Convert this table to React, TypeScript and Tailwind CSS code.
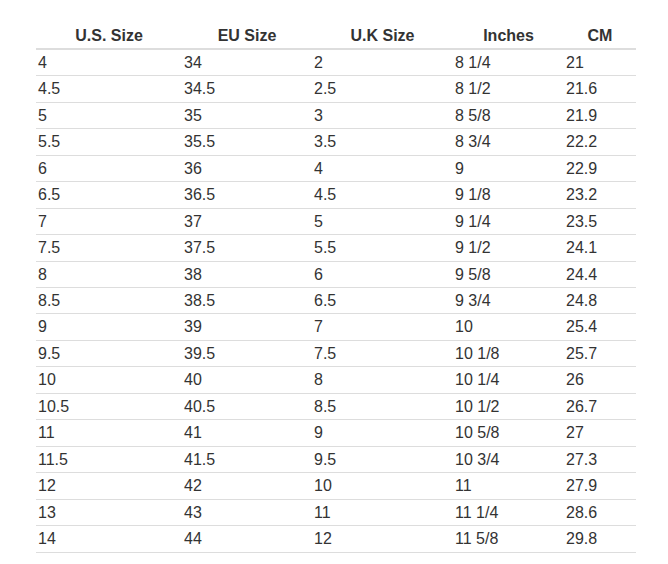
const rows: [string, string, string, string, string][] = [
    ['4', '34', '2', '8 1/4', '21'],
    ['4.5', '34.5', '2.5', '8 1/2', '21.6'],
    ['5', '35', '3', '8 5/8', '21.9'],
    ['5.5', '35.5', '3.5', '8 3/4', '22.2'],
    ['6', '36', '4', '9', '22.9'],
    ['6.5', '36.5', '4.5', '9 1/8', '23.2'],
    ['7', '37', '5', '9 1/4', '23.5'],
    ['7.5', '37.5', '5.5', '9 1/2', '24.1'],
    ['8', '38', '6', '9 5/8', '24.4'],
    ['8.5', '38.5', '6.5', '9 3/4', '24.8'],
    ['9', '39', '7', '10', '25.4'],
    ['9.5', '39.5', '7.5', '10 1/8', '25.7'],
    ['10', '40', '8', '10 1/4', '26'],
    ['10.5', '40.5', '8.5', '10 1/2', '26.7'],
    ['11', '41', '9', '10 5/8', '27'],
    ['11.5', '41.5', '9.5', '10 3/4', '27.3'],
    ['12', '42', '10', '11', '27.9'],
    ['13', '43', '11', '11 1/4', '28.6'],
    ['14', '44', '12', '11 5/8', '29.8'],
];

const headers = ['U.S. Size', 'EU Size', 'U.K Size', 'Inches', 'CM'];

export default function App() {
    return (
        <div className="min-h-[564px] bg-white px-[36px] pt-[20.5px] font-['Liberation_Sans',Arial,sans-serif] text-[16px] text-[#333]">
            <table className="w-[600px] table-fixed border-separate border-spacing-0">
                <colgroup>
                    <col className="w-[146px]" />
                    <col className="w-[130px]" />
                    <col className="w-[141px]" />
                    <col className="w-[111px]" />
                    <col className="w-[72px]" />
                </colgroup>
                <thead>
                    <tr>
                        {headers.map((h) => (
                            <th
                                key={h}
                                className="border-b-2 border-[#ddd] px-[2px] pt-[4px] pb-[2px] text-center font-bold leading-[21.45px]"
                            >
                                {h}
                            </th>
                        ))}
                    </tr>
                </thead>
                <tbody>
                    {rows.map((r) => (
                        <tr key={r[0]}>
                            {r.map((c, i) => (
                                <td
                                    key={i}
                                    className="border-b border-[#ddd] px-[2px] py-[2px] text-left leading-[21.45px]"
                                >
                                    {c}
                                </td>
                            ))}
                        </tr>
                    ))}
                </tbody>
            </table>
        </div>
    );
}
